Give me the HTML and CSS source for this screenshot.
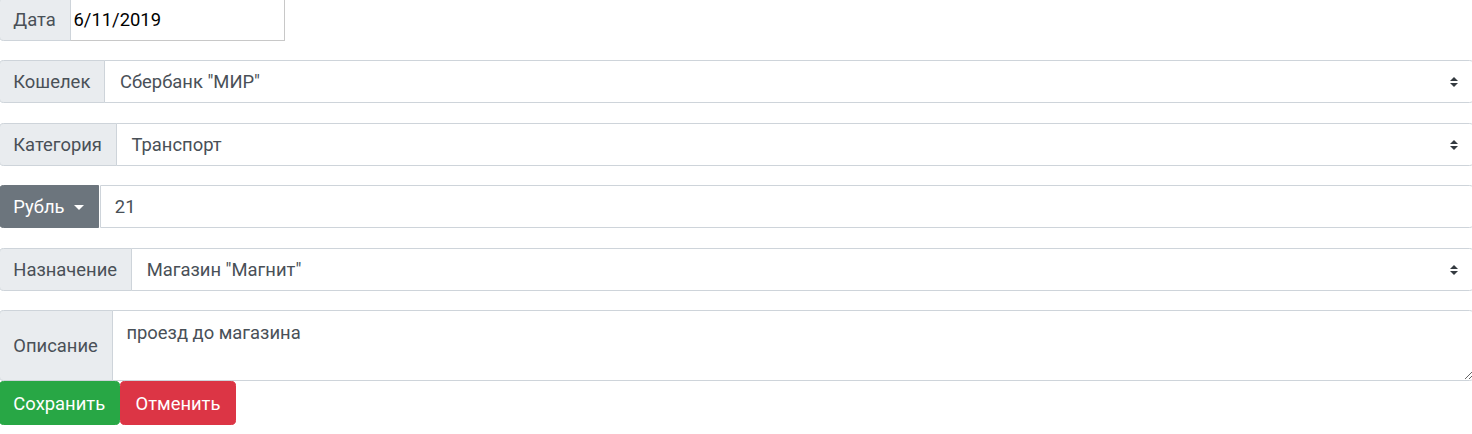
FILE: index.html
```html
<!DOCTYPE html>
<html lang="ru">
<head>
<meta charset="utf-8">
<link rel="stylesheet" href="styles.css">
</head>
<body>
<form class="form">
  <div class="group">
    <span class="label">Дата</span>
    <input class="date" type="text" value="6/11/2019">
  </div>
  <div class="group">
    <span class="label">Кошелек</span>
    <div class="select"><span>Сбербанк "МИР"</span><svg class="arrows" width="8" height="10" viewBox="0 0 4 5"><path fill="#343a40" d="M2 0L0 2h4zm0 5L0 3h4z"/></svg></div>
  </div>
  <div class="group">
    <span class="label">Категория</span>
    <div class="select"><span>Транспорт</span><svg class="arrows" width="8" height="10" viewBox="0 0 4 5"><path fill="#343a40" d="M2 0L0 2h4zm0 5L0 3h4z"/></svg></div>
  </div>
  <div class="group">
    <button type="button" class="dropdown">Рубль <span class="caret"></span></button>
    <input class="control" type="text" value="21">
  </div>
  <div class="group">
    <span class="label">Назначение</span>
    <div class="select"><span>Магазин "Магнит"</span><svg class="arrows" width="8" height="10" viewBox="0 0 4 5"><path fill="#343a40" d="M2 0L0 2h4zm0 5L0 3h4z"/></svg></div>
  </div>
  <div class="group group-area">
    <span class="label">Описание</span>
    <textarea class="area">проезд до магазина</textarea>
  </div>
  <div class="actions">
    <button type="button" class="btn btn-save">Сохранить</button>
    <button type="button" class="btn btn-cancel">Отменить</button>
  </div>
</form>
</body>
</html>
```

FILE: styles.css
```css
html, body {
  margin: 0;
  padding: 0;
  overflow: hidden;
  background: #fff;
}
body {
  font-family: Roboto, "Liberation Sans", Arial, sans-serif;
  font-size: 18.4px;
  line-height: 1.5;
  color: #495057;
}
.form {
  width: 1475px;
  margin-top: -2.5px;
  margin-left: -1.5px;
}
.group {
  display: flex;
  align-items: stretch;
  height: 43px;
  margin-bottom: 19.5px;
}
.group-area {
  height: 71px;
  margin-bottom: 0;
}
.label {
  display: flex;
  align-items: center;
  padding: 1px 13.8px 0;
  background: #e9ecef;
  border: 1px solid #ced4da;
  border-radius: 4.6px 0 0 4.6px;
  color: #495057;
  white-space: nowrap;
  box-sizing: border-box;
}
.date {
  width: 215px;
  height: 43px;
  box-sizing: border-box;
  margin: 0 0 0 -1px;
  border: 1px solid #c8c8c8;
  border-left: 1px solid #ced4da;
  padding: 1px 3px 0;
  font: inherit;
  color: #000;
  outline: none;
}
.select {
  flex: 1;
  display: flex;
  align-items: center;
  justify-content: space-between;
  margin-left: -1px;
  padding: 1px 13.8px 0 14.8px;
  border: 1px solid #ced4da;
  border-radius: 0 4.6px 4.6px 0;
  background: #fff;
  box-sizing: border-box;
}
.arrows {
  display: block;
  margin-right: 1px;
}
.control {
  flex: 1;
  margin: 0 0 0 1px;
  padding: 1px 13.8px 0;
  border: 1px solid #ced4da;
  border-radius: 0 4.6px 4.6px 0;
  font: inherit;
  color: #495057;
  box-sizing: border-box;
  outline: none;
}
.dropdown {
  display: flex;
  align-items: center;
  padding: 1px 13.8px 0;
  width: 100.5px;
  border: 1px solid #6c757d;
  border-radius: 4.6px 0 0 4.6px;
  background: #6c757d;
  color: #fff;
  font: inherit;
  box-sizing: border-box;
}
.caret {
  display: inline-block;
  margin-left: 9px;
  width: 0;
  height: 0;
  border-top: 5.5px solid #fff;
  border-left: 5.5px solid transparent;
  border-right: 5.5px solid transparent;
}
.area {
  flex: 1;
  margin: 0 0 0 -1px;
  padding: 7.5px 13.8px;
  border: 1px solid #ced4da;
  border-radius: 0 4.6px 4.6px 0;
  font: inherit;
  color: #495057;
  box-sizing: border-box;
  resize: vertical;
  outline: none;
}
.actions {
  display: flex;
}
.btn {
  height: 44px;
  padding: 1px 13.8px 0;
  border: 1px solid transparent;
  border-radius: 4.6px;
  font: inherit;
  color: #fff;
  box-sizing: border-box;
}
.btn-save {
  width: 121.5px;
  background: #28a745;
  border-color: #28a745;
}
.btn-cancel {
  width: 116px;
  background: #dc3545;
  border-color: #dc3545;
}
```
